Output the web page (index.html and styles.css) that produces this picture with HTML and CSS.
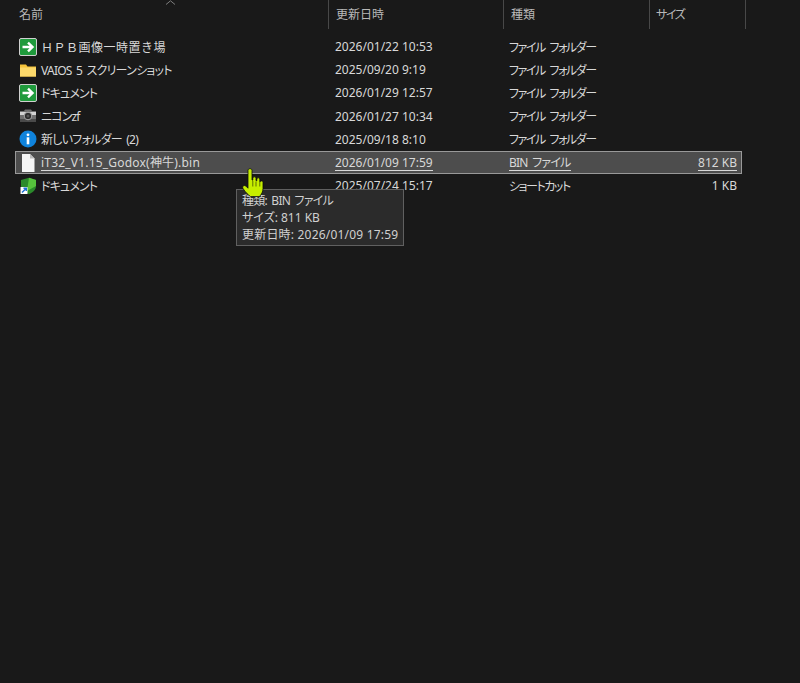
FILE: index.html
```html
<!DOCTYPE html>
<html lang="ja">
<head>
<meta charset="utf-8">
<title>Explorer</title>
<link rel="stylesheet" href="styles.css">
</head>
<body>
<div class="explorer">
  <div class="header">
    <div class="hcell h-name">名前<svg class="sort" width="11" height="5" viewBox="0 0 11 5"><path d="M1 4.500 5.500 .8 10 4.500" fill="none" stroke="#7d7d7d"/></svg></div>
    <div class="hcell h-date">更新日時</div>
    <div class="hcell h-type">種類</div>
    <div class="hcell h-size tight-l">サイズ</div>
  </div>
  <div class="rows">
    <div class="row">
      <div class="name"><svg class="icon" viewBox="0 0 18 18"><use href="#go"/></svg><span class="wide">ＨＰＢ画像一時置き場</span></div>
      <div>2026/01/22 10:53</div><div class="tight-l">ファイル フォルダー</div><div class="size"></div>
    </div>
    <div class="row">
      <div class="name"><svg class="icon" viewBox="0 0 18 18"><path d="M1 3.500h6l1.500 2H17v10H1z" fill="#f5c33b"/><path d="M1 6.500h16v9H1z" fill="#fcd96b"/></svg><span class="tight-s">VAIOS 5 スクリーンショット</span></div>
      <div>2025/09/20 9:19</div><div class="tight-l">ファイル フォルダー</div><div class="size"></div>
    </div>
    <div class="row">
      <div class="name"><svg class="icon" viewBox="0 0 18 18"><use href="#go"/></svg><span class="tight-m">ドキュメント</span></div>
      <div>2026/01/29 12:57</div><div class="tight-l">ファイル フォルダー</div><div class="size"></div>
    </div>
    <div class="row">
      <div class="name"><svg class="icon" viewBox="0 0 18 18"><path d="M1 4h4l1-1.500h6l1 1.500h4v11H1z" fill="#6f6f6f"/><path d="M1 5h16v3H1z" fill="#d2d2d2"/><path d="M1 12h16v3H1z" fill="#4a4a4a"/><circle cx="9" cy="9" r="3.800" fill="#2b2b2b" stroke="#a8a8a8"/><circle cx="9" cy="9" r="1.500" fill="#555"/></svg><span class="tight-m">ニコンzf</span></div>
      <div>2026/01/27 10:34</div><div class="tight-l">ファイル フォルダー</div><div class="size"></div>
    </div>
    <div class="row">
      <div class="name"><svg class="icon" viewBox="0 0 18 18"><circle cx="9" cy="9" r="8.500" fill="#0f83dc"/><circle cx="9" cy="4.800" r="1.400" fill="#fff"/><path d="M7.700 7.300h2.600v7H7.700z" fill="#fff"/></svg><span class="tight-s">新しいフォルダー (2)</span></div>
      <div>2025/09/18 8:10</div><div class="tight-l">ファイル フォルダー</div><div class="size"></div>
    </div>
    <div class="row selected">
      <div class="name"><svg class="icon" viewBox="0 0 18 18"><path d="M3 0h8l4.500 4.500V18H3z" fill="#f6f6f6"/><path d="M11 0v4.500h4.500z" fill="#b9b9b9"/></svg><span class="link loose">iT32_V1.15_Godox(神牛).bin</span></div>
      <div><span class="link">2026/01/09 17:59</span></div><div><span class="link tight-s">BIN ファイル</span></div><div class="size"><span class="link">812 KB</span></div>
    </div>
    <div class="row">
      <div class="name"><svg class="icon" viewBox="0 0 18 18"><path d="M2 3 10 .8l7 2.200v6c0 4-3.500 6.500-7 8.200C6 15.500 2 13 2 9z" fill="#2b8a2b"/><path d="M10 .8l7 2.200v6L8 14z" fill="#56c23c"/><path d="M1.500 10h7v7h-7z" fill="#fff"/><path d="M3 15.500 6.800 11.700M4.500 11.200h2.800V14" fill="none" stroke="#1a6fd4" stroke-width="1.400"/></svg><span class="tight-m">ドキュメント</span></div>
      <div>2025/07/24 15:17</div><div class="tight-l">ショートカット</div><div class="size">1 KB</div>
    </div>
  </div>
  <div class="tooltip">
    <div class="tight-s">種類: BIN ファイル</div>
    <div>サイズ: 811 KB</div>
    <div class="loose">更新日時: 2026/01/09 17:59</div>
  </div>
  <svg class="cursor" width="22" height="30" viewBox="0 0 22 30"><path d="M6 2.500c0-2.400 4-2.400 4 0V12l.8.200v-2c0-1.800 3.200-1.800 3.200 0v2.400l.8.200v-1.700c0-1.700 3-1.700 3 0v2.600l.4.100c0-1.300 2.800-1.300 2.800.5v6.200c0 3.500-1.500 5.800-3.500 8H8.500C6 26.500 3.500 24.500 1 20.500c-1.200-2.200 1.300-4 3-2.300l2 2z" fill="#c6ef00" stroke="#0d0d0d" stroke-width=".8"/><path d="M10.800 13v5.500M14 13.500v5M17.800 14v4.500" stroke="#5c7000" stroke-width="1"/></svg>
</div>
<svg class="defs" width="0" height="0"><defs>
  <g id="go"><rect x=".5" y=".5" width="17" height="17" rx="1.500" fill="#1f9a3c" stroke="#d0d0d0"/><path d="M3.500 9H13M9 4.700 13.500 9 9 13.300" fill="none" stroke="#fff" stroke-width="2.400"/></g>
</defs></svg>
</body>
</html>
```
FILE: styles.css
```css
* { box-sizing: border-box; }
html, body { margin: 0; height: 100%; }
body {
  background: #191919;
  color: #d8d8d8;
  font-family: "Noto Sans", "Noto Sans CJK JP", sans-serif;
  font-feature-settings: "palt";
  font-size: 12px;
  overflow: hidden;
}
.explorer { position: relative; height: 683px; }
.header {
  display: grid;
  grid-template-columns: 329px 175px 146px 96px;
  height: 27px;
  color: #b8b8b8;
}
.hcell {
  position: relative;
  border-right: 1px solid #484848;
  line-height: 29px;
  padding-left: 7px;
}
.h-name { padding-left: 19px; }
.h-size { padding-left: 6px; }
.sort { position: absolute; left: 165px; top: 0; }
.rows { padding: 8px 0 0 15px; width: 742px; }
.row {
  display: grid;
  grid-template-columns: 319px 174px 130px 1fr;
  align-items: center;
  height: 23.2px;
  border: 1px solid transparent;
  padding-right: 4px;
  white-space: nowrap;
}
.name { display: flex; align-items: center; gap: 4px; padding-left: 3px; }
.icon { width: 18px; height: 18px; flex: none; }
.size { text-align: right; }
.selected {
  background: #4d4d4d;
  border-color: #999;
}
.link { border-bottom: 1px solid #d8d8d8; line-height: 15px; display: inline-block; }
.wide { font-feature-settings: normal; letter-spacing: .5px; }
.loose { letter-spacing: .2px; }
.tight-s { letter-spacing: -.75px; word-spacing: 2px; }
.tight-m { letter-spacing: -.85px; }
.tight-l { letter-spacing: -1.450px; word-spacing: 3px; }
.tooltip {
  position: absolute;
  left: 236px;
  top: 189px;
  width: 168px;
  height: 57px;
  padding: 2px 0 0 5px;
  background: #2b2b2b;
  border: 1px solid #606060;
  line-height: 17px;
  color: #d0d0d0;
}
.cursor { position: absolute; left: 242px; top: 168px; }
.defs { position: absolute; }
```
